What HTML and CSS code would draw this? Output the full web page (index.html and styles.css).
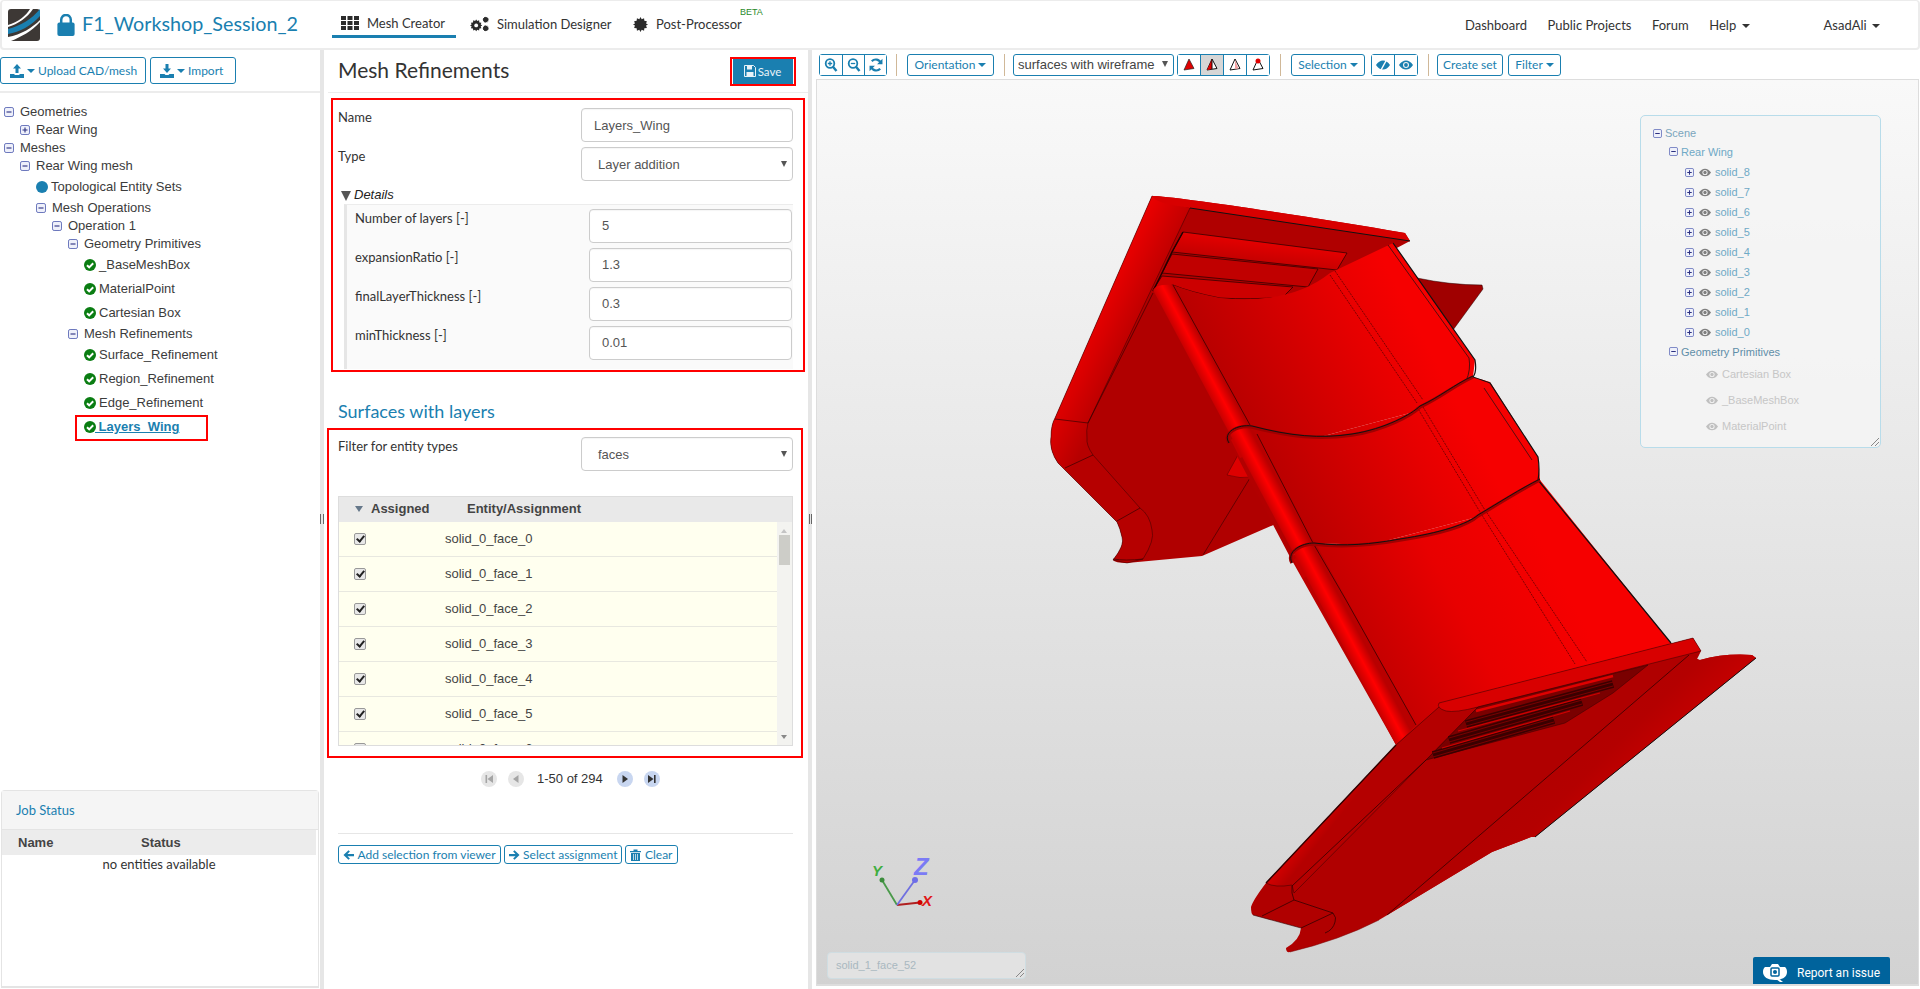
FILE: index.html
```html
<!DOCTYPE html>
<html lang="en">
<head>
<meta charset="utf-8">
<title>F1_Workshop_Session_2</title>
<link rel="stylesheet" href="styles.css">
</head>
<body>
<svg class="defs" aria-hidden="true">
  <symbol id="minus" viewBox="0 0 10 10"><rect x=".5" y=".5" width="9" height="9" rx="1.6" fill="#eef0fa" stroke="#6c78bd"/><path d="M2.5 5h5" stroke="#2b2f80" stroke-width="1.1"/></symbol>
  <symbol id="plus" viewBox="0 0 10 10"><rect x=".5" y=".5" width="9" height="9" rx="1.6" fill="#eef0fa" stroke="#6c78bd"/><path d="M2.5 5h5M5 2.5v5" stroke="#2b2f80" stroke-width="1.1"/></symbol>
  <symbol id="check" viewBox="0 0 12 12"><circle cx="6" cy="6" r="6" fill="#0a7d12"/><path d="M3 6.2l2.2 2.2L9.2 4.3" fill="none" stroke="#fff" stroke-width="2"/></symbol>
  <symbol id="eye" viewBox="0 0 14 10"><path d="M0 5c2-3 4.300-4.500 7-4.500S12 2 14 5c-2 3-4.300 4.500-7 4.500S2 8 0 5z" fill="currentColor"/><circle cx="7" cy="5" r="3" fill="#f3f3f3"/><circle cx="7" cy="5" r="1.900" fill="currentColor"/></symbol>
  <symbol id="upload" viewBox="0 0 14 14"><path d="M7 0l4 4.500H8.500V9h-3V4.500H3zM0 10h4.500v1h5v-1H14v4H0z" fill="currentColor"/></symbol>
  <symbol id="import" viewBox="0 0 14 14"><path d="M5.500 0h3v4.500H11L7 9 3 4.500h2.500zM0 10h4.500l1 1h3l1-1H14v4H0z" fill="currentColor"/></symbol>
  <symbol id="save" viewBox="0 0 12 12"><path d="M.5.500h9l2 2v9H.5z" fill="none" stroke="currentColor"/><path d="M3 1h5v3.500H3zM2.500 7h7v4.500h-7z" fill="currentColor"/></symbol>
  <symbol id="larrow" viewBox="0 0 12 12"><path d="M6 .8l1.500 1.500-2.600 2.500H12v2.500H4.900l2.600 2.500L6 11.300.5 6z" fill="currentColor"/></symbol>
  <symbol id="rarrow" viewBox="0 0 12 12"><path d="M6 .8L4.500 2.300l2.600 2.500H0v2.500h7.100l-2.600 2.500L6 11.300 11.500 6z" fill="currentColor"/></symbol>
  <symbol id="trash" viewBox="0 0 11 12"><path d="M0 2h11v1.300H0zM3.500 2V.5h4V2zM1 4h9v8H1z" fill="currentColor"/><path d="M3.500 5v6M5.500 5v6M7.500 5v6" stroke="#fff" stroke-width=".7"/></symbol>
  <symbol id="zin" viewBox="0 0 13 14"><circle cx="5.500" cy="5.500" r="4.300" fill="none" stroke="currentColor" stroke-width="1.800"/><path d="M8.500 8.800L12 13" stroke="currentColor" stroke-width="2.400"/><path d="M3.300 5.500h4.400M5.500 3.300v4.400" stroke="currentColor" stroke-width="1.300"/></symbol>
  <symbol id="zout" viewBox="0 0 13 14"><circle cx="5.500" cy="5.500" r="4.300" fill="none" stroke="currentColor" stroke-width="1.800"/><path d="M8.500 8.800L12 13" stroke="currentColor" stroke-width="2.400"/><path d="M3.300 5.500h4.400" stroke="currentColor" stroke-width="1.300"/></symbol>
  <symbol id="refresh" viewBox="0 0 13 13"><path d="M11 4.700A5 5 0 0 0 2.600 3M2 8.300A5 5 0 0 0 10.400 10" fill="none" stroke="currentColor" stroke-width="2"/><path d="M12.500 .8v5h-5zM.5 12.200v-5h5z" fill="currentColor"/></symbol>
  <symbol id="eyeoff" viewBox="0 0 14 10"><path d="M0 5c2-3 4.300-4.500 7-4.500S12 2 14 5c-2 3-4.300 4.500-7 4.500S2 8 0 5z" fill="currentColor"/><path d="M10.500 0L5 10" stroke="#fff" stroke-width="1.400"/></symbol>
  <symbol id="gear" viewBox="0 0 16 16"><path d="M8 0l1.300 2.300 2.500-.9.300 2.700 2.700.3-.9 2.500L16 8l-2.100 1.100.9 2.500-2.700.3-.3 2.700-2.500-.9L8 16l-1.300-2.300-2.500.9-.3-2.700-2.700-.3.9-2.500L0 8l2.100-1.100-.9-2.500 2.700-.3.3-2.700 2.500.9z" fill="currentColor"/></symbol>
</svg>

<div class="app">
  <header class="nav">
    <svg class="logo" viewBox="0 0 32 32">
      <rect width="32" height="32" rx="3" fill="#3d3835"/>
      <path d="M0 20C12 17 24 10 32 0v7C23 17 12 23 0 25z" fill="#1a7fb0"/>
      <path d="M0 28C13 26 25 18 32 11v2C24 22 13 28 3 32H0z" fill="#fff"/>
      <path d="M0 16C10 13 18 7 22 0h3C19 9 10 15 0 18z" fill="#fff"/>
    </svg>
    <svg class="lock" viewBox="0 0 18 23"><rect y="9" width="18" height="14" rx="2" fill="#1a7fb0"/><path d="M4 10V6a5 5 0 0 1 10 0v4" fill="none" stroke="#1a7fb0" stroke-width="2.600"/></svg>
    <span class="title">F1_Workshop_Session_2</span>
    <a class="tab tab-on">
      <svg class="ic16" viewBox="0 0 18 14"><g fill="#2b2b2b"><rect width="5" height="4"/><rect x="6.500" width="5" height="4"/><rect x="13" width="5" height="4"/><rect y="5" width="5" height="4"/><rect x="6.500" y="5" width="5" height="4"/><rect x="13" y="5" width="5" height="4"/><rect y="10" width="5" height="4"/><rect x="6.500" y="10" width="5" height="4"/><rect x="13" y="10" width="5" height="4"/></g></svg>
      Mesh Creator
    </a>
    <a class="tab tab-sim">
      <svg class="ic18" viewBox="0 0 20 16" color="#2b2b2b"><use href="#gear" width="13" height="13" y="3"/><use href="#gear" x="13" width="7" height="7"/><use href="#gear" x="13" y="9" width="7" height="7"/><circle cx="6.500" cy="9.500" r="2" fill="#fff"/></svg>
      Simulation Designer
    </a>
    <a class="tab tab-post">
      <svg class="ic15" viewBox="0 0 16 16" color="#2b2b2b"><use href="#gear"/></svg>
      Post-Processor
      <span class="beta">BETA</span>
    </a>
    <nav class="nav-right">
      <a>Dashboard</a>
      <a>Public Projects</a>
      <a>Forum</a>
      <a>Help <i class="caret"></i></a>
      <a class="user">AsadAli <i class="caret"></i></a>
    </nav>
  </header>

  <main class="main">
    <aside class="left">
      <div class="left-tools">
        <button class="btn btn-up"><svg class="i13"><use href="#upload"/></svg> <i class="caret"></i> Upload CAD/mesh</button>
        <button class="btn btn-imp"><svg class="i13"><use href="#import"/></svg> <i class="caret"></i> Import</button>
      </div>
      <div class="tree">
        <div class="n d0"><svg class="tg"><use href="#minus"/></svg>Geometries</div>
        <div class="n d1"><svg class="tg"><use href="#plus"/></svg>Rear Wing</div>
        <div class="n d0"><svg class="tg"><use href="#minus"/></svg>Meshes</div>
        <div class="n d1"><svg class="tg"><use href="#minus"/></svg>Rear Wing mesh</div>
        <div class="n d2 topo"><i class="dot"></i>Topological Entity Sets</div>
        <div class="n d2"><svg class="tg"><use href="#minus"/></svg>Mesh Operations</div>
        <div class="n d3"><svg class="tg"><use href="#minus"/></svg>Operation 1</div>
        <div class="n d4"><svg class="tg"><use href="#minus"/></svg>Geometry Primitives</div>
        <div class="n leaf"><svg class="ck"><use href="#check"/></svg>_BaseMeshBox</div>
        <div class="n leaf"><svg class="ck"><use href="#check"/></svg>MaterialPoint</div>
        <div class="n leaf"><svg class="ck"><use href="#check"/></svg>Cartesian Box</div>
        <div class="n d4 after-leaf"><svg class="tg"><use href="#minus"/></svg>Mesh Refinements</div>
        <div class="n leaf"><svg class="ck"><use href="#check"/></svg>Surface_Refinement</div>
        <div class="n leaf"><svg class="ck"><use href="#check"/></svg>Region_Refinement</div>
        <div class="n leaf"><svg class="ck"><use href="#check"/></svg>Edge_Refinement</div>
        <div class="n leaf sel"><svg class="ck"><use href="#check"/></svg><a>&nbsp;Layers_Wing</a></div>
      </div>
      <section class="jobs">
        <h3>Job Status</h3>
        <div class="jobs-body">
          <div class="jobs-head"><b class="jn">Name</b><b class="js">Status</b></div>
          <div class="jobs-empty">no entities available</div>
        </div>
      </section>
    </aside>

    <div class="gutter"><span class="grip"></span></div>

    <section class="mid">
      <div class="mid-head">
        <h1>Mesh Refinements</h1>
        <div class="save-mark"><button class="save"><svg class="i12"><use href="#save"/></svg> Save</button></div>
      </div>

      <div class="mark form-a">
        <div class="row"><label>Name</label><div class="field">Layers_Wing</div></div>
        <div class="row"><label>Type</label><div class="field sel-f">Layer addition<i class="tri"></i></div></div>
        <div class="sum"><i class="sum-tri"></i><em>Details</em></div>
        <div class="details">
          <div class="row"><label class="lato">Number of layers [-]</label><div class="field f-in">5</div></div>
          <div class="row"><label class="lato">expansionRatio [-]</label><div class="field f-in">1.3</div></div>
          <div class="row"><label class="lato">finalLayerThickness [-]</label><div class="field f-in">0.3</div></div>
          <div class="row"><label class="lato">minThickness [-]</label><div class="field f-in">0.01</div></div>
        </div>
      </div>

      <h2>Surfaces with layers</h2>

      <div class="mark form-b">
        <div class="row"><label>Filter for entity types</label><div class="field sel-f">faces<i class="tri"></i></div></div>
        <div class="tbl">
          <div class="tbl-head"><i class="th-tri"></i><b class="th-a">Assigned</b><b class="th-e">Entity/Assignment</b></div>
          <div class="tbl-body">
            <div class="rows">
              <div class="tr"><i class="cb"></i>solid_0_face_0</div>
              <div class="tr"><i class="cb"></i>solid_0_face_1</div>
              <div class="tr"><i class="cb"></i>solid_0_face_2</div>
              <div class="tr"><i class="cb"></i>solid_0_face_3</div>
              <div class="tr"><i class="cb"></i>solid_0_face_4</div>
              <div class="tr"><i class="cb"></i>solid_0_face_5</div>
              <div class="tr"><i class="cb"></i>solid_0_face_6</div>
            </div>
            <div class="sb"><i class="sb-up"></i><i class="sb-th"></i><i class="sb-dn"></i></div>
          </div>
        </div>
      </div>

      <div class="pager">
        <span class="pg off"><svg viewBox="0 0 16 16"><path d="M4.500 4h1.600v8H4.500zM12 4v8L6.500 8z" fill="#a5a5a5"/></svg></span>
        <span class="pg off"><svg viewBox="0 0 16 16"><path d="M10.500 4v8L5 8z" fill="#a5a5a5"/></svg></span>
        <span class="pg-t">1-50 of 294</span>
        <span class="pg on"><svg viewBox="0 0 16 16"><path d="M5.500 4v8L11 8z" fill="#333"/></svg></span>
        <span class="pg on"><svg viewBox="0 0 16 16"><path d="M4 4v8l5.500-4zM10 4h1.600v8H10z" fill="#333"/></svg></span>
      </div>

      <div class="actions">
        <button class="btn btn-s"><svg class="i11"><use href="#larrow"/></svg> Add selection from viewer</button>
        <button class="btn btn-s"><svg class="i11"><use href="#rarrow"/></svg> Select assignment</button>
        <button class="btn btn-s"><svg class="i11"><use href="#trash"/></svg> Clear</button>
      </div>
    </section>

    <div class="gutter2"><span class="grip"></span></div>

    <section class="viewer">
      <div class="vt">
        <div class="grp"><button><svg class="i14"><use href="#zin"/></svg></button><button><svg class="i14"><use href="#zout"/></svg></button><button><svg class="i14"><use href="#refresh"/></svg></button></div>
        <i class="sep sep-first"></i>
        <button class="tb w-orient">Orientation <i class="caret"></i></button>
        <i class="sep"></i>
        <div class="v-sel">surfaces with wireframe<i class="tri"></i></div>
        <div class="grp grp-t">
          <button><svg class="i14"><path d="M7 1L2 12l10-1.500z" fill="#e00000" stroke="#222" stroke-width=".7"/></svg></button>
          <button class="act"><svg class="i14"><path d="M7 1L2 12l10-1.500z" fill="#fff" stroke="#111"/><path d="M7 1L2 12l5-1z" fill="#e00000"/><path d="M7 1v10" stroke="#111"/></svg></button>
          <button><svg class="i14"><path d="M7 1L2 12l10-1.500z" fill="#fff" stroke="#111"/><path d="M7 2l3.500 8.500L7 11z" fill="#f2a0a0"/></svg></button>
          <button><svg class="i14"><path d="M7 1L2 12l10-1.500z" fill="#fff" stroke="#111"/><circle cx="7" cy="3" r="2.500" fill="#e00000"/></svg></button>
        </div>
        <i class="sep"></i>
        <button class="tb w-sel">Selection <i class="caret"></i></button>
        <div class="grp grp-e"><button><svg class="i14e"><use href="#eyeoff"/></svg></button><button><svg class="i14e"><use href="#eye"/></svg></button></div>
        <i class="sep"></i>
        <button class="tb w-create">Create set</button>
        <button class="tb w-filter">Filter <i class="caret"></i></button>
      </div>

      <div class="canvas">
        <svg class="wing" viewBox="816 79 1104 907">
          <defs>
            <linearGradient id="gBody" gradientUnits="userSpaceOnUse" x1="1190" y1="400" x2="1400" y2="292"><stop offset="0" stop-color="#ac0000"/><stop offset=".75" stop-color="#e60000"/><stop offset="1" stop-color="#f60000"/></linearGradient>
            <linearGradient id="gBody2" gradientUnits="userSpaceOnUse" x1="1300" y1="640" x2="1530" y2="520"><stop offset="0" stop-color="#b00000"/><stop offset=".6" stop-color="#e80000"/><stop offset="1" stop-color="#f60000"/></linearGradient>
            <linearGradient id="gTube" gradientUnits="userSpaceOnUse" x1="1153" y1="290" x2="1170.600" y2="280.600"><stop offset="0" stop-color="#c80000"/><stop offset=".5" stop-color="#ff0000"/><stop offset="1" stop-color="#b80000"/></linearGradient>
            <linearGradient id="gRim" gradientUnits="userSpaceOnUse" x1="1100" y1="290" x2="1150" y2="315"><stop offset="0" stop-color="#f00000"/><stop offset="1" stop-color="#b60000"/></linearGradient>
            <linearGradient id="gLouv" gradientUnits="userSpaceOnUse" x1="1240" y1="232" x2="1236" y2="262"><stop offset="0" stop-color="#ee0000"/><stop offset="1" stop-color="#c00000"/></linearGradient>
            <linearGradient id="gRim2" gradientUnits="userSpaceOnUse" x1="1320" y1="790" x2="1345" y2="810"><stop offset="0" stop-color="#f20000"/><stop offset="1" stop-color="#b40000"/></linearGradient>
            <linearGradient id="gSide" gradientUnits="userSpaceOnUse" x1="1530" y1="750" x2="1610" y2="830"><stop offset="0" stop-color="#b00000"/><stop offset=".5" stop-color="#b40000"/><stop offset="1" stop-color="#cc0000"/></linearGradient>
          </defs>

          <!-- rear fragment behind the main plane -->
          <path d="M1417 278Q1450 285 1482 285L1483 289 1453 330 1420 300z" fill="#a00000" stroke="#200" stroke-width=".5"/>

          <!-- upper end plate -->
          <path d="M1152 196C1165 195 1300 215 1405 233L1410 241 1393 250 1278 523 1202 556 1127 563Q1115 563 1113 560Q1125 545 1122 537Q1120 528 1117 522L1058 463Q1049 450 1051 437Q1051 425 1055 418z" fill="#b00000"/>
          <path d="M1152 196L1055 418Q1051 425 1051 437Q1049 450 1058 463L1117 522Q1120 528 1122 537Q1125 545 1113 560L1127 563 1143 559Q1155 540 1152 530Q1150 515 1140 508L1093 455Q1086 445 1087 438Q1086 430 1088 423L1190 208z" fill="url(#gRim)" stroke="#300" stroke-width=".5"/>
          <path d="M1152 196C1165 195 1300 215 1405 233L1410 241 1190 208C1170 205 1155 202 1152 196z" fill="#d80000"/>
          <path d="M1190 208L1410 241" stroke="#111" stroke-width="1"/>
          <path d="M1153 293L1088 423M1055 419L1088 423M1065 468L1093 455M1117 521L1140 508M1113 559Q1125 561 1143 559" fill="none" stroke="#200" stroke-width=".6"/>
          <path d="M1250 478L1203 555" stroke="#300" stroke-width=".6"/>
          <path d="M1227 475L1238 455 1253 477Q1240 479 1227 475z" fill="#dd0000" stroke="#300" stroke-width=".4"/>

          <!-- louvers -->
          <path d="M1183 232L1347 253 1337 270 1172 252z" fill="url(#gLouv)" stroke="#200" stroke-width=".7"/>
          <path d="M1172 254L1318 269 1308 287 1162 273z" fill="url(#gLouv)" stroke="#200" stroke-width=".7"/>
          <path d="M1162 276L1293 287 1283 297Q1250 300 1220 298 1190 292 1173 285L1153 290z" fill="#cc0000" stroke="#200" stroke-width=".7"/>
          <path d="M1183 232L1172 252 1162 273 1153 291" stroke="#200" stroke-width="1.500" fill="none"/>

          <!-- main plane, three panels between the ridges -->
          <path d="M1173 285Q1190 292 1220 298 1290 305 1330 273L1393 243 1475 360 1473 377 1410 413 1320 437 1250 427 1227 433z" fill="url(#gBody)"/>
          <path d="M1227 437L1250 427 1320 437 1410 413 1473 377 1490 382 1538 457 1540 480 1477 517 1370 545 1313 543 1290 557z" fill="url(#gBody)"/>
          <path d="M1290 557L1313 543 1370 545 1477 517 1540 480 1671 643 1690 660 1440 725 1396 745z" fill="url(#gBody2)"/>

          <!-- right edge -->
          <path d="M1393 243L1475 360Q1477 372 1473 377 1485 381 1490 383L1538 457Q1540 470 1538 480L1671 643" fill="none" stroke="#111" stroke-width="1.200"/>
          <path d="M1388 245L1469 358Q1471 370 1466 381M1484 388L1532 460" fill="none" stroke="#111" stroke-width=".7"/>
          <path d="M1330 275L1417 403M1335 271L1423 400M1423 407L1483 507 1587 662M1417 407L1480 512 1575 664" fill="none" stroke="#300" stroke-width=".6" stroke-dasharray="2 1"/>

          <!-- tube -->
          <path d="M1153 290Q1156 284 1173 285L1416 725 1396 745z" fill="url(#gTube)"/>
          <path d="M1173 285L1250 425M1257 434L1313 543 1346 600 1416 725" fill="none" stroke="#200" stroke-width=".7"/>

          <!-- ridges wrap over the tube -->
          <path d="M1229 443C1222 433 1238 425 1252 427 1290 437 1320 440 1352 435 1385 430 1412 415 1420 407 1440 398 1455 385 1473 377" fill="none" stroke="#a00000" stroke-width="3.500"/>
          <path d="M1229 443C1222 432 1238 424 1252 426 1290 436 1320 439 1352 434 1385 429 1412 414 1420 406 1440 397 1455 384 1473 376" fill="none" stroke="#111" stroke-width="1"/>
          <path d="M1231 440Q1240 430 1252 433L1262 450 1240 458z" fill="url(#gTube)"/>
          <path d="M1292 563C1286 552 1302 544 1314 544 1345 548 1372 545 1400 540 1440 534 1468 525 1478 516 1500 503 1520 490 1540 480" fill="none" stroke="#a00000" stroke-width="3.500"/>
          <path d="M1292 563C1286 551 1302 543 1314 543 1345 547 1372 544 1400 539 1440 533 1468 524 1478 515 1500 502 1520 489 1540 479" fill="none" stroke="#111" stroke-width="1"/>
          <path d="M1294 560Q1302 549 1314 550L1324 568 1303 578z" fill="url(#gTube)"/>

          <!-- lower end plate -->
          <path d="M1439 707L1396 745 1266 883Q1253 900 1251 907 1251 914 1253 915L1301 928Q1300 940 1286 948 1286 953 1290 952 1340 940 1379 920L1492 852 1531 837 1535 837 1756 658 1752 655Q1725 653 1700 660 1685 665 1682 673 1690 675 1701 651L1693 638 1439 703z" fill="#b00000"/>
          <path d="M1689 655L1387 915 1379 920 1492 852 1531 837 1535 837 1756 658 1752 655Q1725 653 1700 660z" fill="url(#gSide)"/>
          <path d="M1396 745L1439 707 1448 711 1478 707 1426 760 1294 893 1292 885Q1275 888 1266 883z" fill="url(#gRim2)" stroke="#300" stroke-width=".5"/>
          <path d="M1266 883L1396 745" stroke="#300" stroke-width="1.400"/>
          <path d="M1439 703L1693 638 1701 651 1478 707Q1455 713 1446 711 1436 708 1439 703z" fill="#d80000" stroke="#300" stroke-width=".5"/>

          <!-- lower louvers -->
          <path d="M1426 760L1478 707 1648 665 1613 693 1565 723z" fill="#7a0000" stroke="#300" stroke-width=".5"/>
          <path d="M1476 711L1613 676" stroke="#e00000" stroke-width="2.500" fill="none"/>
          <path d="M1466 724L1613 684M1449 740L1582 702M1433 755L1554 720" stroke="#3a0000" stroke-width="8" fill="none"/>
          <path d="M1466 722L1613 682M1466 726L1613 686M1449 738L1582 700M1449 742L1582 704M1433 753L1554 718M1433 757L1554 722" stroke="#8a0000" stroke-width=".8" fill="none"/>
          <path d="M1458 731L1600 693M1442 748L1570 711" stroke="#d00000" stroke-width="1.200" fill="none"/>

          <path d="M1426 760L1292 886Q1291 893 1294 900L1333 913Q1337 918 1335 922 1333 930 1325 933M1294 900L1262 916M1333 913L1301 928M1689 655L1387 915" fill="none" stroke="#200" stroke-width=".7"/>
          <path d="M1535 837L1756 658" stroke="#111" stroke-width="1"/>
          <path d="M1253 915L1301 928" stroke="#300" stroke-width=".6"/>
          <path d="M1290 952Q1340 940 1379 920" stroke="#700" stroke-width=".5" fill="none"/>

          <!-- axes -->
          <path d="M897 905L920 902.500" stroke="#b02020" stroke-width="1.800"/>
          <circle cx="920" cy="902.500" r="2.500" fill="#d00000"/>
          <path d="M897 905L882 880" stroke="#4a9a4a" stroke-width="1.800"/>
          <circle cx="882" cy="880" r="2.500" fill="#3c8c3c"/>
          <path d="M897 905L915 880" stroke="#7070e0" stroke-width="1.800"/>
          <circle cx="915" cy="880" r="3" fill="#6e6ee8"/>
          <text x="922" y="906" class="ax ax-x">X</text>
          <text x="872" y="876" class="ax ax-y">Y</text>
          <text x="914" y="875" class="ax ax-z">Z</text>
        </svg>

        <div class="scene">
          <div class="s s0"><svg class="tg"><use href="#minus"/></svg>Scene</div>
          <div class="s s1"><svg class="tg"><use href="#minus"/></svg>Rear Wing</div>
          <div class="s s2"><svg class="tg"><use href="#plus"/></svg><svg class="ey"><use href="#eye"/></svg>solid_8</div>
          <div class="s s2"><svg class="tg"><use href="#plus"/></svg><svg class="ey"><use href="#eye"/></svg>solid_7</div>
          <div class="s s2"><svg class="tg"><use href="#plus"/></svg><svg class="ey"><use href="#eye"/></svg>solid_6</div>
          <div class="s s2"><svg class="tg"><use href="#plus"/></svg><svg class="ey"><use href="#eye"/></svg>solid_5</div>
          <div class="s s2"><svg class="tg"><use href="#plus"/></svg><svg class="ey"><use href="#eye"/></svg>solid_4</div>
          <div class="s s2"><svg class="tg"><use href="#plus"/></svg><svg class="ey"><use href="#eye"/></svg>solid_3</div>
          <div class="s s2"><svg class="tg"><use href="#plus"/></svg><svg class="ey"><use href="#eye"/></svg>solid_2</div>
          <div class="s s2"><svg class="tg"><use href="#plus"/></svg><svg class="ey"><use href="#eye"/></svg>solid_1</div>
          <div class="s s2"><svg class="tg"><use href="#plus"/></svg><svg class="ey"><use href="#eye"/></svg>solid_0</div>
          <div class="s s1 s-gp"><svg class="tg"><use href="#minus"/></svg>Geometry Primitives</div>
          <div class="s s3"><svg class="ey"><use href="#eye"/></svg>Cartesian Box</div>
          <div class="s s3"><svg class="ey"><use href="#eye"/></svg>_BaseMeshBox</div>
          <div class="s s3"><svg class="ey"><use href="#eye"/></svg>MaterialPoint</div>
          <i class="resize"></i>
        </div>

        <div class="pick">solid_1_face_52<i class="resize"></i></div>

        <div class="report">
          <svg class="cam" viewBox="0 0 24 20"><path d="M2 4h5l2-3h6l2 3h5c1.500 1 2 3 2 5 0 5-5 8-12 8S0 14 0 9c0-2 .5-4 2-5z" fill="#fff"/><path d="M15 15l5 4h-3l-4-3z" fill="#fff"/><rect x="8" y="5" width="8" height="8" rx="1" fill="none" stroke="#00639c" stroke-width="1.500"/><circle cx="12" cy="9" r="2" fill="#00639c"/></svg>
          Report an issue
        </div>
      </div>
    </section>
  </main>
</div>
</body>
</html>
```

FILE: styles.css
```css
*, *::after { box-sizing: border-box; }
html, body { margin: 0; height: 989px; overflow: hidden; background: #fff; }
body { font: 13px/18px "Liberation Sans", Arial, sans-serif; color: #333; }
.defs { position: absolute; width: 0; height: 0; }
.app { display: grid; grid-template-rows: 50px 939px; height: 989px; }
button { font: inherit; background: #fff; cursor: pointer; padding: 0; }
i { font-style: normal; }
svg { display: inline-block; }
.caret { display: inline-block; width: 0; height: 0; border-left: 4px solid transparent; border-right: 4px solid transparent; border-top: 4px solid currentColor; vertical-align: middle; }

/* top bar */
.nav { display: flex; align-items: center; border: 2px solid #ececec; border-top-width: 1px; border-radius: 4px; position: relative; font: 13px/18px Lato, sans-serif; color: #333; }
.logo { width: 32px; height: 32px; margin-left: 6px; }
.lock { width: 18px; height: 22px; margin-left: 17px; }
.title { font: 19.750px/28px Lato, sans-serif; color: #1a7fb0; margin-left: 7px; width: 250px; white-space: nowrap; padding-bottom: 1px; }
.tab { display: flex; align-items: center; height: 46px; align-self: flex-start; white-space: nowrap; }
.tab-on { width: 124px; padding: 9px 0 0 9px; gap: 8px; border-bottom: 3px solid #1a7fb0; height: 37px; }
.tab-sim { margin-left: 14px; gap: 8px; width: 163px; }
.tab-post { gap: 8px; position: relative; }
.ic16 { width: 18px; height: 14px; }
.ic18 { width: 19px; height: 16px; }
.ic15 { width: 15px; height: 15px; }
.beta { position: absolute; left: 107px; top: 6px; font: 9px/10px "Liberation Sans", sans-serif; color: #2a8a2a; }
.nav-right { margin-left: auto; display: flex; align-items: center; padding-right: 38px; }
.nav-right a { margin-left: 20.500px; white-space: nowrap; }
.nav-right .caret { margin-left: 2px; }
.nav-right .user { margin-left: 74px; }

/* columns */
.main { display: grid; grid-template-columns: 320px 4px 484px 8px 1fr; height: 939px; }
.left { display: flex; flex-direction: column; height: 939px; }
.left-tools { display: flex; gap: 4px; height: 43px; padding-top: 7px; border-bottom: 2px solid #ececec; }
.btn { display: inline-flex; align-items: center; color: #1a7fb0; border: 1px solid #1a7fb0; border-radius: 3px; font: 12px/16px Lato, sans-serif; white-space: nowrap; }
.btn-up { width: 146px; height: 27px; padding-left: 9px; gap: 3px; }
.btn-imp { width: 86px; height: 27px; padding-left: 9px; gap: 3px; }
.i13 { width: 14px; height: 14px; }
.i12 { width: 12px; height: 12px; }
.i11 { width: 11px; height: 12px; }
.i14 { width: 14px; height: 14px; }
.i14e { width: 14px; height: 10px; }

/* project tree */
.tree { flex: 1; padding-top: 10px; }
.n { display: flex; align-items: center; height: 18px; white-space: nowrap; color: #3c3c3c; }
.tg { width: 10px; height: 10px; flex: none; margin-right: 6px; }
.d0 { padding-left: 4px; }
.d1 { padding-left: 20px; }
.d2 { padding-left: 36px; height: 21px; }
.d3 { padding-left: 52px; }
.d4 { padding-left: 68px; }
.topo { height: 24px; }
.topo + .d2 { height: 18px; }
.dot { width: 12px; height: 12px; border-radius: 50%; background: #1a7fb0; margin-right: 3px; flex: none; }
.leaf { padding-left: 84px; height: 24px; }
.ck { width: 12px; height: 12px; flex: none; margin-right: 3px; }
.sel { position: relative; }
.sel a { color: #1a7fb0; font-weight: bold; text-decoration: underline; margin-left: -4px; }
.sel::after { content: ""; position: absolute; left: 75px; top: 0; width: 133px; height: 26px; border: 2px solid #f00; }

/* job status */
.jobs { height: 198px; margin: 0 1px 1px; border: 1px solid #e4e4e4; border-radius: 4px 4px 0 0; flex: none; border-bottom-width: 2px; }
.jobs h3 { margin: 0; height: 39px; background: #f5f5f5; border-bottom: 1px solid #e4e4e4; font: 13px/38px Lato, sans-serif; color: #1a7fb0; padding-left: 14px; }
.jobs-body { height: 156px; margin-right: 2px; }
.jobs-head { height: 25px; background: #ececec; display: flex; align-items: center; color: #444; }
.jn { margin-left: 16px; width: 123px; }
.jobs-empty { text-align: center; font: 13px/18px Lato, sans-serif; color: #333; }

/* gutters */
.gutter { background: #e6e6e6; position: relative; }
.gutter2 { border-left: 4px solid #e6e6e6; position: relative; }
.grip { position: absolute; left: 0; top: 464px; width: 4px; height: 10px; border-left: 1px solid #666; border-right: 1px solid #666; }
.gutter2 .grip { left: -3px; width: 3px; }

/* middle column */
.mid { display: flex; flex-direction: column; }
.mid-head { display: flex; align-items: center; justify-content: space-between; height: 43px; margin-left: 4px; padding: 7px 12px 7px 10px; border-bottom: 1px solid #ececec; }
h1 { margin: 0; font: 400 21px/28px Lato, sans-serif; color: #333; position: relative; top: -1px; }
.save-mark { border: 2px solid #f00; padding: 0 1px; width: 66px; height: 29px; display: flex; }
.save { flex: 1; background: #1a7fb0; border: 0; border-radius: 0; color: #e8f2f7; font: 11.500px/25px Lato, sans-serif; display: flex; align-items: center; justify-content: center; gap: 2px; padding-right: 1px; }
.mark { border: 2px solid #f00; }
.form-a { margin: 5px 3px 0 7px; height: 274px; padding: 8px 10px 0 5px; }
.row { display: flex; justify-content: space-between; margin-bottom: 5px; }
label { color: #333; font: 13px/18px Lato, sans-serif; }
.field { width: 212px; height: 34px; border: 1px solid #ccc; border-radius: 4px; background: #fff; color: #555; padding: 0 12px; line-height: 33px; position: relative; box-shadow: inset 0 1px 1px rgba(0,0,0,.04); }
.sel-f { padding-left: 16px; }
.tri { position: absolute; right: 5px; top: 13px; width: 0; height: 0; border-left: 3.500px solid transparent; border-right: 3.500px solid transparent; border-top: 6px solid #555; }
.sum { display: flex; align-items: center; height: 18px; margin: 0 0 0 3px; color: #222; }
.sum em { margin-left: 3px; font-size: 13px; }
.sum-tri { width: 0; height: 0; border-left: 5.500px solid transparent; border-right: 5.500px solid transparent; border-top: 10px solid #555; margin-top: 2px; }
.details { margin: 0 0 0 6px; height: 165px; border-top: 1px solid #ececec; border-left: 3px solid #e6e6e6; background: #fafafa; padding: 4px 1px 0 8px; }
.f-in { width: 203px; line-height: 32px; }

h2 { margin: 0 0 0 14px; height: 56px; padding-top: 27px; font: 400 18px/24px Lato, sans-serif; color: #1a7fb0; }
.form-b { margin: 0 5px 0 3px; height: 330px; padding: 7px 8px 0 9px; }
.form-b .row { margin-bottom: 25px; }
.tbl { border: 1px solid #ddd; height: 250px; display: flex; flex-direction: column; }
.tbl-head { flex: none; height: 25px; padding-bottom: 2px; background: #e9e9e9; display: flex; align-items: center; color: #444; }
.th-tri { width: 0; height: 0; border-left: 4.500px solid transparent; border-right: 4.500px solid transparent; border-top: 6px solid #66788a; margin-left: 16px; }
.th-a { margin-left: 8px; width: 96px; }
.tbl-body { flex: 1; display: flex; overflow: hidden; }
.rows { flex: 1; background: #ffffef; overflow: hidden; }
.tr { height: 35px; border-bottom: 1px solid #e8e8e0; display: flex; align-items: center; padding-left: 15px; color: #444; }
.cb { width: 12px; height: 12px; flex: none; margin-right: 79px; border: 1px solid #999; border-radius: 2px; background: #e8e8e8; position: relative; }
.cb::after { content: ""; position: absolute; left: 3px; top: 0; width: 5px; height: 8px; border: solid #222; border-width: 0 2px 2px 0; transform: rotate(40deg); }
.sb { width: 15px; background: #f3f3f0; position: relative; flex: none; }
.sb-up { position: absolute; left: 4px; top: 7px; border-left: 3.500px solid transparent; border-right: 3.500px solid transparent; border-bottom: 4px solid #c4c4c4; }
.sb-dn { position: absolute; left: 4px; bottom: 6px; border-left: 3.500px solid transparent; border-right: 3.500px solid transparent; border-top: 4px solid #888; }
.sb-th { position: absolute; left: 2px; top: 13px; width: 11px; height: 30px; background: #cdcdc8; }

.pager { display: flex; align-items: center; height: 16px; margin: 13px 0 0 157px; }
.pg { width: 16px; height: 16px; border-radius: 50%; margin-right: 11px; }
.pg svg { display: block; width: 16px; height: 16px; }
.off { background: #e6e6e6; }
.on { background: #c8d6f0; }
.pg-t { width: 66px; margin: 0 14px 0 2px; white-space: nowrap; color: #333; }
.actions { display: flex; gap: 3px; margin: 46px 15px 0 14px; padding-top: 11px; border-top: 1px solid #e6e6e6; }
.btn-s { height: 19px; padding: 0 4px; gap: 3.500px; }

/* viewer */
.viewer { display: flex; flex-direction: column; min-width: 0; }
.vt { height: 29px; display: flex; align-items: center; padding-left: 3px; font: 12px/16px Lato, sans-serif; color: #1a7fb0; }
.grp { display: flex; border: 1px solid #1a7fb0; border-radius: 3px; height: 22px; color: #1a7fb0; }
.grp button { border: 0; border-left: 1px solid #1a7fb0; width: 22px; height: 20px; display: flex; align-items: center; justify-content: center; color: inherit; padding: 0; }
.grp button:first-child { border-left: 0; }
.grp .act { background: #d6d6d6; }
.grp-t { width: 93px; margin-left: 3px; }
.grp-t button { flex: 1; width: auto; }
.grp-e { width: 47px; margin-left: 6px; }
.grp-e button { flex: 1; width: auto; }
.sep { width: 1px; height: 22px; background: #d0b898; margin: 0 10px; }
.sep-first { margin-left: 9px; }
.tb { height: 22px; border: 1px solid #1a7fb0; border-radius: 3px; color: #1a7fb0; font: 12px/16px Lato, sans-serif; white-space: nowrap; }
.w-orient { width: 87px; }
.v-sel { width: 161px; height: 22px; border: 1px solid #1a7fb0; border-radius: 3px; font: 13px/20px "Liberation Sans", sans-serif; color: #444; padding-left: 4px; position: relative; margin-left: -2px; white-space: nowrap; }
.v-sel .tri { top: 6px; }
.w-sel { width: 74px; }
.w-create { width: 66px; margin-left: -2px; }
.w-filter { width: 53px; margin-left: 5px; }
.canvas { position: relative; height: 907px; margin-right: 1px; border: 1px solid #ddd; border-bottom: 2px solid #ddd; background: linear-gradient(180deg, #f9f9f9 0%, #d2d2d2 100%); overflow: hidden; }
.wing { position: absolute; left: -1px; top: -1px; width: 1104px; height: 907px; }
.ax { font: bold 15px "Liberation Sans", sans-serif; }
.ax-x { fill: #e01818; font-style: italic; }
.ax-y { fill: #3fae3f; font-style: italic; }
.ax-z { fill: #7b7bf5; font-size: 24px; font-style: italic; }

.scene { position: absolute; left: 823px; top: 35px; width: 241px; height: 333px; border: 1px solid #b8dcea; border-radius: 5px; background: rgba(244,244,244,.85); font-size: 11px; color: #6fa9c6; padding-top: 8px; }
.s { display: flex; align-items: center; height: 20px; white-space: nowrap; }
.s .tg { width: 9px; height: 9px; margin-right: 3px; }
.s0 { padding-left: 12px; height: 18px; color: #7aa5bd; }
.s1 { padding-left: 28px; height: 19px; }
.s0 + .s1 { margin-bottom: 1px; }
.s2 { padding-left: 44px; }
.s2 .tg { margin-right: 5px; }
.ey { width: 12px; height: 9px; margin-right: 4px; color: #7f7f7f; flex: none; }
.s-gp { color: #5f8ea8; }
.s3 { padding-left: 65px; height: 26px; color: #c6c6c6; }
.s3 .ey { color: #c0c0c0; margin-right: 4px; }
.resize { position: absolute; right: 1px; bottom: 1px; width: 8px; height: 8px; background: linear-gradient(135deg, transparent 45%, #888 45%, #888 55%, transparent 55%, transparent 70%, #888 70%, #888 80%, transparent 80%); }

.pick { position: absolute; left: 10px; top: 872px; width: 199px; height: 27px; border: 1px solid #cfdde2; border-radius: 4px; background: #e2e2e2; color: #a9b8c0; font-size: 11px; line-height: 24px; padding-left: 8px; }
.report { position: absolute; left: 936px; top: 877px; width: 137px; height: 32px; background: #00639c; color: #fff; border-radius: 2px 2px 0 0; font: 12px/32px Roboto, sans-serif; display: flex; align-items: center; gap: 10px; padding-left: 10px; }
.cam { width: 24px; height: 20px; flex: none; }
```
